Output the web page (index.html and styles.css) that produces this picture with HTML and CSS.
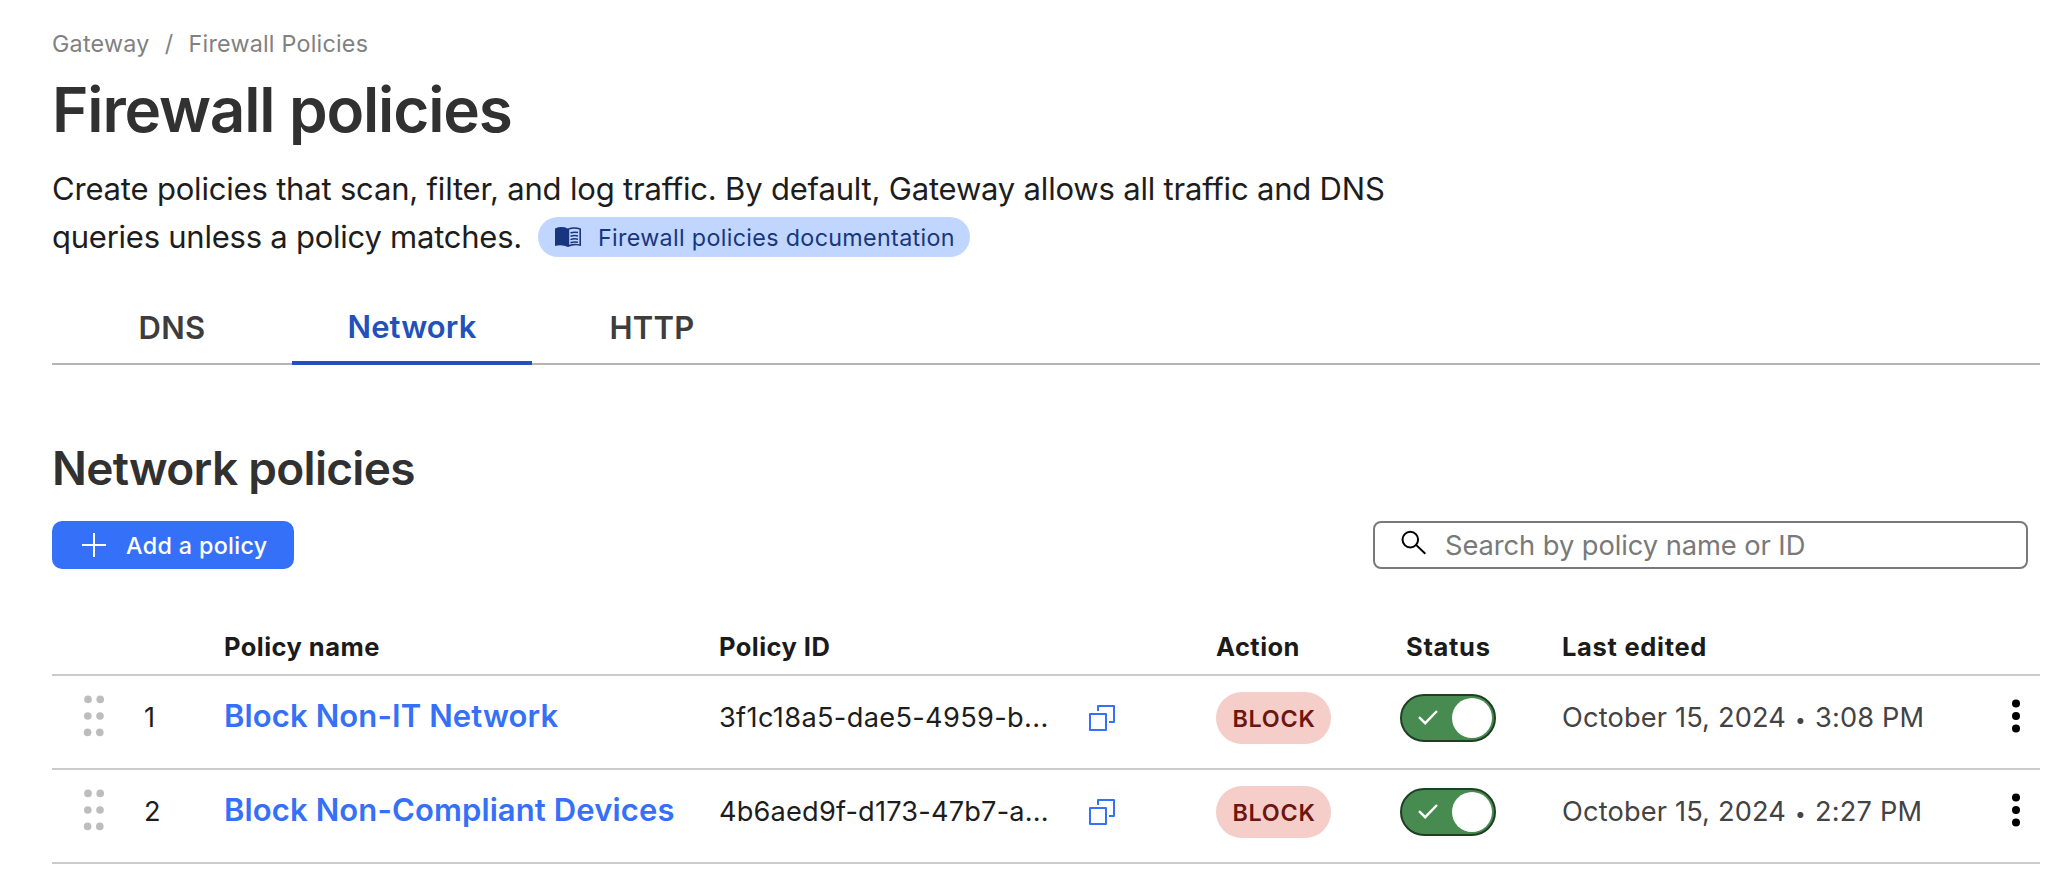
FILE: index.html
```html
<!DOCTYPE html>
<html lang="en">
<head>
<meta charset="utf-8">
<title>Firewall policies</title>
<link rel="stylesheet" href="styles.css">
</head>
<body>
<svg width="0" height="0" class="sprite" aria-hidden="true">
  <symbol id="grip" viewBox="0 0 22 42"><g fill="#bdbdbd"><circle cx="5" cy="4.4" r="3.8"/><circle cx="17.2" cy="4.4" r="3.8"/><circle cx="4.8" cy="21" r="3.8"/><circle cx="17" cy="21" r="3.8"/><circle cx="4.6" cy="37.4" r="3.8"/><circle cx="16.8" cy="37.4" r="3.8"/></g></symbol>
  <symbol id="copy" viewBox="0 0 26 26"><g fill="none" stroke="#3571f8" stroke-width="2" stroke-linejoin="round"><rect x="1" y="9" width="16" height="16"/><path d="M9 6V1h16v16h-5"/></g></symbol>
  <symbol id="kebab" viewBox="0 0 10 34"><circle cx="5" cy="4.5" r="4"/><circle cx="5" cy="17" r="4"/><circle cx="5" cy="29.5" r="4"/></symbol>
  <symbol id="check" viewBox="0 0 22 18"><path d="M2 8.2 8.2 14.2 20 2" fill="none" stroke="#fff" stroke-width="2.4"/></symbol>
</svg>
<main class="page">
  <nav class="crumbs"><a>Gateway</a><span class="slash">/</span><a>Firewall Policies</a></nav>
  <h1 class="title">Firewall policies</h1>
  <p class="intro">Create policies that scan, filter, and log traffic. By default, Gateway allows all traffic and DNS<br><span class="intro-end">queries unless a policy matches.</span><a class="doc"><svg class="book" viewBox="0 0 26 20"><path d="M0 1.4Q6.500-1.200 12.800 1.400 19-1 26 1.400V19Q19 17.300 13 20 7 17.300 0 19Z" fill="#18367f"/><path d="M14.200 2.600Q19 .9 24.400 2.500V17.200Q19 16 14.200 17.800Z" fill="#c1d6fe"/><path d="M15.500 6Q19 4.600 23 5.600M15.500 9.300Q19 7.900 23 8.900M15.500 12.600Q19 11.200 23 12.200M15.500 15.700Q19 14.300 23 15.300" fill="none" stroke="#18367f" stroke-width="1.500"/></svg><span class="doc-label">Firewall policies documentation</span></a></p>
  <nav class="tabs"><a class="tab">DNS</a><a class="tab active">Network</a><a class="tab">HTTP</a></nav>
  <h2 class="subtitle">Network policies</h2>
  <div class="toolbar">
    <button class="add"><svg width="24" height="24" viewBox="0 0 24 24"><path d="M12 0v24M0 12h24" stroke="#fff" stroke-width="2"/></svg><span class="add-label">Add a policy</span></button>
    <label class="search"><svg width="26" height="26" viewBox="0 0 26 26"><g fill="none" stroke="#000" stroke-width="2"><circle cx="9.300" cy="9.600" r="7.800"/><path d="m14.800 14.600 9.500 9.200"/></g></svg><span>Search by policy name or ID</span></label>
  </div>
  <section class="table">
    <div class="row head"><span></span><span></span><span>Policy name</span><span>Policy ID</span><span></span><span>Action</span><span class="status">Status</span><span class="edited">Last edited</span><span></span></div>
    <div class="row">
      <svg class="grip"><use href="#grip"/></svg><span class="num">1</span><a class="name">Block Non-IT Network</a><span class="id">3f1c18a5-dae5-4959-b...</span><svg class="copy"><use href="#copy"/></svg><span class="badge">BLOCK</span><span class="toggle"><svg class="check"><use href="#check"/></svg><i class="knob"></i></span><span class="date">October 15, 2024 <b class="dot">•</b> 3:08 PM</span><svg class="kebab"><use href="#kebab"/></svg>
    </div>
    <div class="row">
      <svg class="grip"><use href="#grip"/></svg><span class="num">2</span><a class="name">Block Non-Compliant Devices</a><span class="id id-tight">4b6aed9f-d173-47b7-a...</span><svg class="copy"><use href="#copy"/></svg><span class="badge">BLOCK</span><span class="toggle"><svg class="check"><use href="#check"/></svg><i class="knob"></i></span><span class="date">October 15, 2024 <b class="dot">•</b> 2:27 PM</span><svg class="kebab"><use href="#kebab"/></svg>
    </div>
  </section>
</main>
</body>
</html>
```
FILE: styles.css
```css
* { box-sizing: border-box; }
body { margin: 0; background: #fff; color: #1d1d1d; font-family: Inter, "Liberation Sans", sans-serif; }
.sprite { display: block; }
.page { width: 2064px; height: 884px; padding: 28px 24px 0 52px; overflow: hidden; }
.crumbs { display: flex; height: 32px; line-height: 32px; font-size: 23.3px; letter-spacing: .23px; color: #818181; }
.slash { width: 39px; text-align: center; }
.title { margin: 10px 0 0; font-size: 62px; font-weight: 600; line-height: 80px; letter-spacing: -1.15px; color: #313131; }
.intro { margin: 15px 0 0; font-size: 31px; line-height: 48px; letter-spacing: -.19px; white-space: nowrap; }
.intro-end { letter-spacing: -.24px; }
.doc { display: inline-flex; align-items: center; vertical-align: top; width: 432px; height: 40px; margin: 4px 0 0 16px; padding-left: 17px; border-radius: 20px; background: #c1d6fe; color: #18367f; font-size: 23.3px; letter-spacing: .33px; line-height: 40px; }
.doc-label { padding-top: 2px; }
.book { width: 26px; height: 20px; margin-right: 17px; }
.tabs { display: flex; height: 72px; margin-top: 32px; box-shadow: inset 0 -2px #b5b5b5; }
.tab { width: 240px; padding-bottom: 2px; text-align: center; font-size: 31px; font-weight: 600; line-height: 70px; letter-spacing: .3px; color: #3d3d3d; }
.active { border-bottom: 4px solid #2251bc; color: #2251bc; line-height: 68px; letter-spacing: .1px; }
.subtitle { margin: 75px 0 0; font-size: 46px; font-weight: 600; line-height: 56px; letter-spacing: -.7px; color: #313131; }
.toolbar { display: flex; justify-content: space-between; margin: 25px 12px 0 0; }
.add { display: flex; align-items: center; gap: 20px; width: 242px; height: 48px; padding: 0 0 0 30px; border: 0; border-radius: 10px; background: #3571f8; color: #fff; font: 500 23.3px/46px Inter, sans-serif; letter-spacing: .35px; }
.add-label { padding-top: 2px; }
.search { display: flex; width: 655px; height: 48px; padding-left: 26px; border: 2px solid #797979; border-radius: 8px; color: #797979; font-size: 27.3px; line-height: 46px; letter-spacing: -.07px; }
.search svg { margin: 7px 18px 0 0; }
.table { margin-top: 51px; }
.row { display: grid; grid-template-columns: 92px 80px 495px 370px 127px 184px 162px 439px 39px; align-items: center; height: 94px; padding-bottom: 8px; border-bottom: 2px solid #cbcbcb; white-space: nowrap; font-size: 27.2px; line-height: 40px; }
.head { height: 56px; padding: 0; font-size: 25.5px; font-weight: 650; letter-spacing: .45px; color: #1b1b1b; }
.status { padding-left: 6px; letter-spacing: .7px; }
.edited { letter-spacing: .7px; }
.grip { width: 22px; height: 42px; margin: -4px 0 0 31px; }
.name { color: #3571f8; font-size: 31px; font-weight: 600; letter-spacing: .12px; margin-top: -4px; }
.id { letter-spacing: .33px; }
.id-tight { letter-spacing: .18px; }
.copy { width: 26px; height: 26px; }
.badge { width: 115px; height: 52px; padding-left: 1px; border-radius: 26px; background: #f5cdc9; color: #6d1510; text-align: center; font-size: 23.3px; font-weight: 600; line-height: 54px; letter-spacing: .75px; }
.toggle { display: flex; align-items: center; justify-content: space-between; width: 96px; height: 48px; padding: 0 2px 0 15px; border: 2px solid #1f3f24; border-radius: 24px; background: #478b50; }
.check { width: 22px; height: 18px; }
.knob { width: 40px; height: 40px; border-radius: 50%; background: #fff; }
.date { color: #434343; letter-spacing: .16px; }
.dot { margin: 0 1.3px; font-size: 19px; font-weight: 400; line-height: 0; }
.kebab { width: 10px; height: 34px; margin: -4px 0 0 10px; }
```
